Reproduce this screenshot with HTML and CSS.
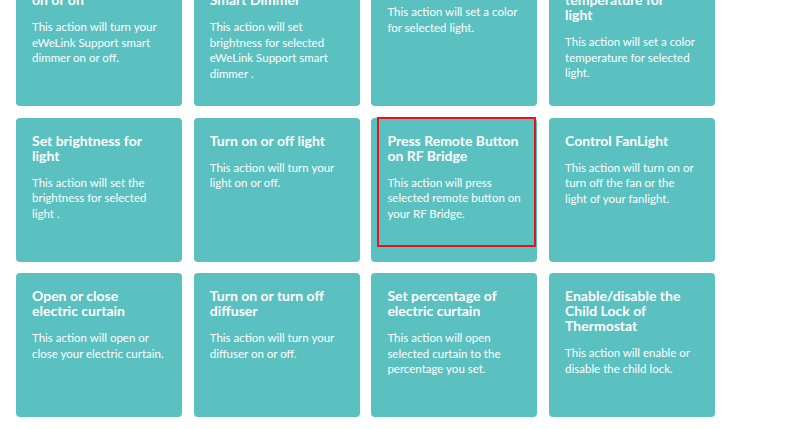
FILE: index.html
```html
<!DOCTYPE html>
<html lang="en">
<head>
<meta charset="utf-8">
<title>Actions</title>
<link rel="stylesheet" href="styles.css">
</head>
<body>
<main class="page">
  <ul class="grid">
    <li class="card"><h3 class="title">Turn smart dimmer on or off</h3><p class="desc">This action will turn your eWeLink Support smart dimmer on or off.</p></li>
    <li class="card"><h3 class="title">Set brightness for Smart Dimmer</h3><p class="desc">This action will set brightness for selected eWeLink Support smart dimmer .</p></li>
    <li class="card"><h3 class="title">Set color for light</h3><p class="desc">This action will set a color for selected light.</p></li>
    <li class="card"><h3 class="title">Set color temperature for<br>light</h3><p class="desc">This action will set a color temperature for selected light.</p></li>

    <li class="card"><h3 class="title">Set brightness for light</h3><p class="desc">This action will set the brightness for selected light .</p></li>
    <li class="card"><h3 class="title">Turn on or off light</h3><p class="desc">This action will turn your light on or off.</p></li>
    <li class="card"><span class="focus"></span><h3 class="title">Press Remote Button on RF Bridge</h3><p class="desc">This action will press selected remote button on your RF Bridge.</p></li>
    <li class="card"><h3 class="title">Control FanLight</h3><p class="desc">This action will turn on or turn off the fan or the light of your fanlight.</p></li>

    <li class="card"><h3 class="title">Open or close electric curtain</h3><p class="desc">This action will open or close your electric curtain.</p></li>
    <li class="card"><h3 class="title">Turn on or turn off diffuser</h3><p class="desc">This action will turn your diffuser on or off.</p></li>
    <li class="card"><h3 class="title">Set percentage of electric curtain</h3><p class="desc">This action will open selected curtain to the percentage you set.</p></li>
    <li class="card"><h3 class="title">Enable/disable the Child Lock of Thermostat</h3><p class="desc">This action will enable or disable the child lock.</p></li>
  </ul>
</main>
</body>
</html>
```
FILE: styles.css
```css
html, body {
  margin: 0;
  padding: 0;
  background: #ffffff;
  overflow: hidden;
}
body {
  font-family: Lato, "Liberation Sans", sans-serif;
  color: #ffffff;
}
.page {
  padding-left: 16px;
}
.grid {
  list-style: none;
  margin: -38px 0 0 0;
  padding: 0;
  display: grid;
  grid-template-columns: repeat(4, 166px);
  grid-auto-rows: 144px;
  column-gap: 11.7px;
  row-gap: 11.7px;
}
.card {
  position: relative;
  background: #5bc0c0;
  border-radius: 4px;
  padding: 15px 16px 16px 16px;
  box-sizing: border-box;
}
.title {
  margin: 0;
  font-size: 14px;
  font-weight: 700;
  line-height: 15px;
}
.desc {
  margin: 12px 0 0 0;
  font-size: 11.5px;
  font-weight: 400;
  line-height: 15.5px;
}
.focus {
  position: absolute;
  left: 6px;
  right: 1px;
  top: -1px;
  height: 130px;
  border: 2px solid #e5141c;
  box-sizing: border-box;
}
```
